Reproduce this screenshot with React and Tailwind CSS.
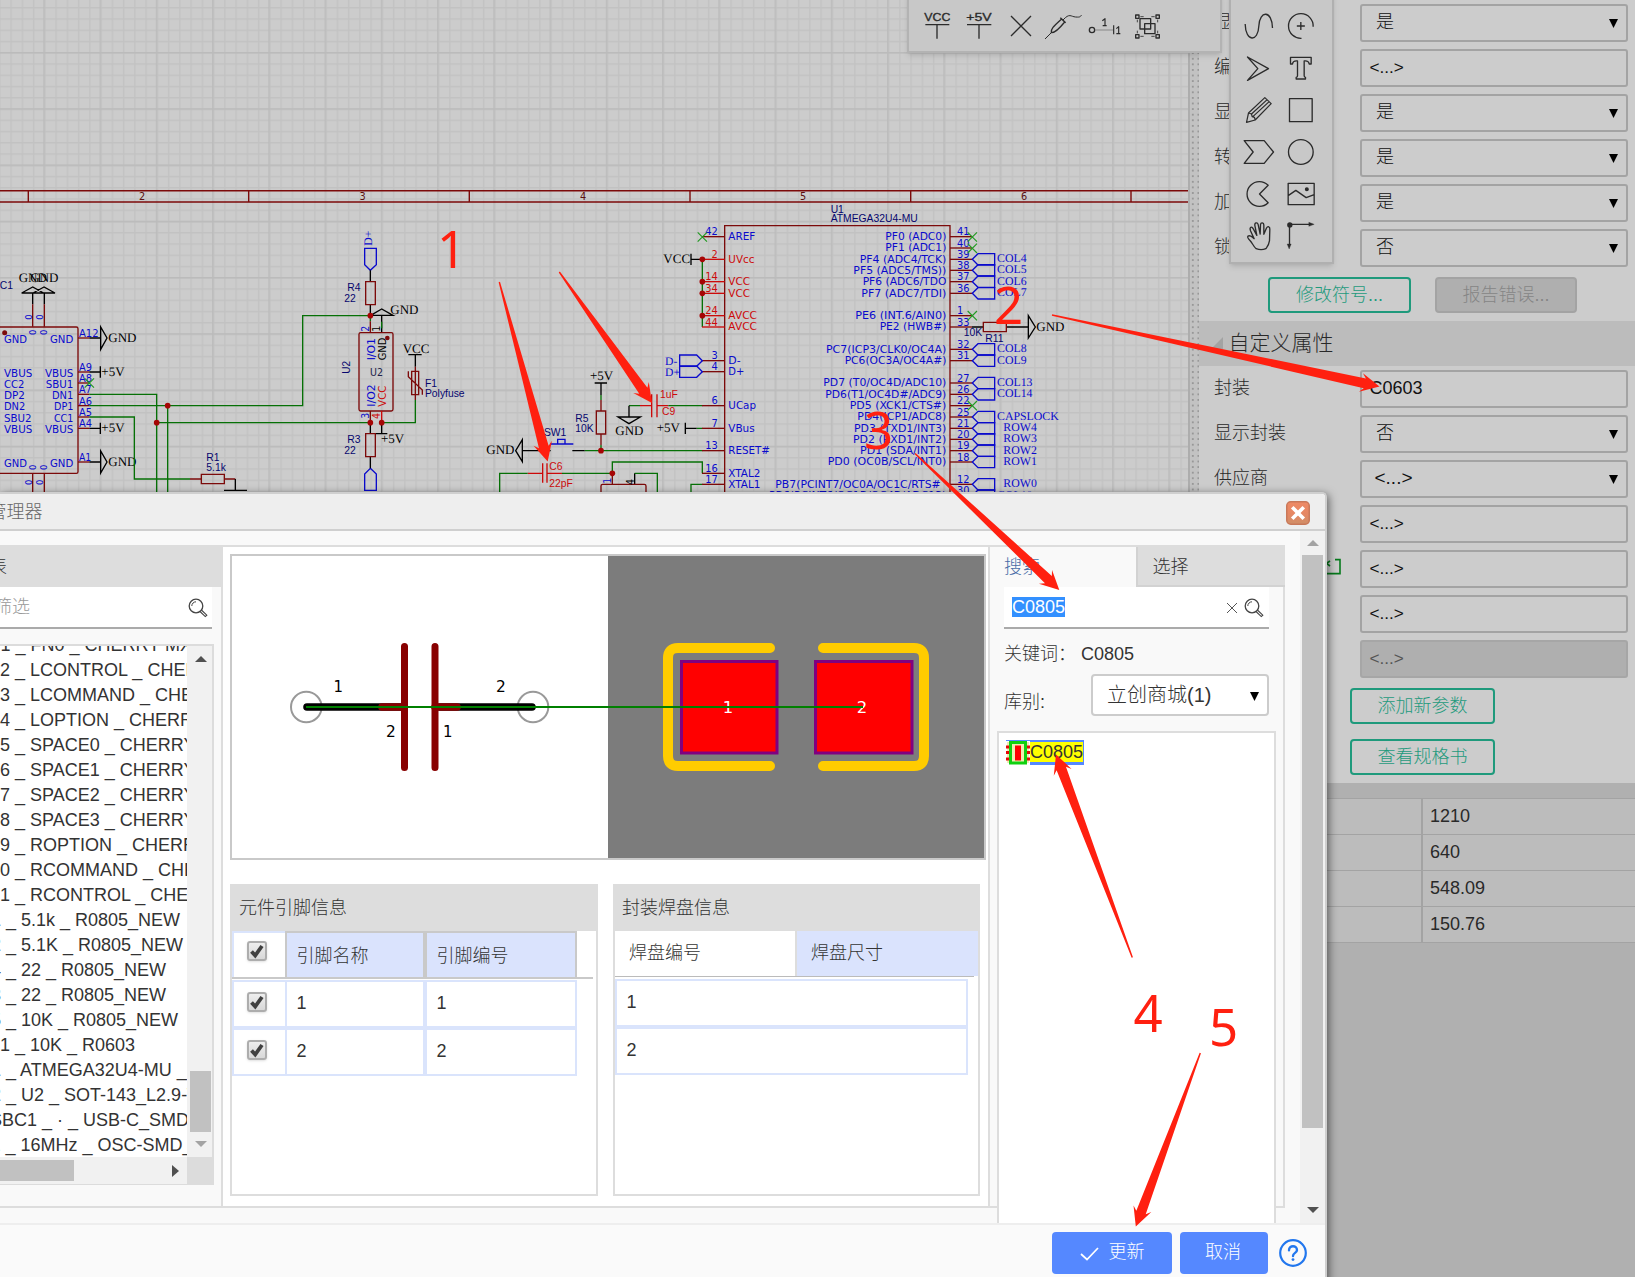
import React from "react";

const DR = "#7c0a0a";
const RED = "#cc0a0a";
const BLUE = "#0a0acc";
const GREEN = "#067006";
const NAVY = "#06066e";
const MARK = "#ff2010";

const FONTS = {
  pin: '"DejaVu Sans", sans-serif',
  label: '"Liberation Sans", sans-serif',
  net: '"Liberation Serif", serif',
};

function T({ x, y, t, c = BLUE, f = "pin", s = 31, w, end, r }) {
  return (
    <text
      x={x}
      y={y}
      fill={c}
      fontFamily={FONTS[f]}
      fontSize={s}
      textAnchor={end ? "end" : "start"}
      textLength={w}
      lengthAdjust={w ? "spacingAndGlyphs" : undefined}
      textRendering={f === "net" ? "geometricPrecision" : undefined}
      transform={r ? `rotate(-90 ${x} ${y})` : undefined}
    >
      {t}
    </text>
  );
}

const P = ({ d, c = DR, w = 4, fill = "none" }) => <path d={d} stroke={c} strokeWidth={w} fill={fill} />;
const Dot = ({ x, y, r = 8.5, c = "#a50505" }) => <circle cx={x} cy={y} r={r} fill={c} />;
const Cross = ({ x, y }) => (
  <P d={`M${x - 14},${y - 14} L${x + 14},${y + 14} M${x - 14},${y + 14} L${x + 14},${y - 14}`} c="#239a23" w={3.5} />
);
const Net = ({ x, y, t = "GND" }) => <T x={x} y={y} t={t} c="#000" f="net" s={39} />;
const Lab = ({ x, y, t, c = NAVY, r }) => <T x={x} y={y} t={t} c={c} f="label" s={31} r={r} />;

const usbLeft = [["GND", 489, 69], ["VBUS", 591, 85], ["CC2", 624, 61], ["DP2", 657, 63], ["DN2", 690, 64], ["SBU2", 726, 83], ["VBUS", 759, 85], ["GND", 861, 69]];
const usbRight = [["GND", 489, 70], ["VBUS", 591, 85], ["SBU1", 624, 83], ["DN1", 657, 64], ["DP1", 690, 58], ["CC1", 726, 58], ["VBUS", 759, 85], ["GND", 861, 70]];
const usbPins = [["A12", 471, 59], ["A9", 573, 39], ["A8", 606, 39], ["A7", 640, 38], ["A6", 674, 39], ["A5", 709, 39], ["A4", 741, 39], ["A1", 844, 37]];
const usbPinY = [474, 576, 609, 643, 677, 711, 745, 846];

const mcuLeft = [
  ["42", "AREF", 170, 81, 0], ["2", "UVcc", 238, 78, 1], ["14", "VCC", 305, 65, 1], ["34", "VCC", 340, 65, 1],
  ["24", "AVCC", 407, 86, 1], ["44", "AVCC", 441, 86, 1], ["3", "D-", 542, 37, 0], ["4", "D+", 575, 48, 0],
  ["6", "UCap", 677, 83, 0], ["7", "VBus", 745, 79, 0], ["13", "RESET#", 812, 125, 0], ["16", "XTAL2", 880, 96, 0], ["17", "XTAL1", 913, 96, 0],
];
const mcuRight = [
  ["41", "PF0 (ADC0)", 170, 676], ["40", "PF1 (ADC1)", 204, 676], ["39", "PF4 (ADC4/TCK)", 238, 599, "COL4"],
  ["38", "PF5 (ADC5/TMS))", 271, 580, "COL5"], ["37", "PF6 (ADC6/TDO", 305, 608, "COL6"], ["36", "PF7 (ADC7/TDI)", 340, 604, "COL7"],
  ["1", "PE6 (INT.6/AIN0)", 407, 586], ["33", "PE2 (HWB#)", 441, 659], ["32", "PC7(ICP3/CLK0/OC4A)", 508, 498, "COL8"],
  ["31", "PC6(OC3A/OC4A#)", 542, 554, "COL9"], ["27", "PD7 (T0/OC4D/ADC10)", 609, 490, "COL13"], ["26", "PD6(T1/OC4D#/ADC9)", 643, 496, "COL14"],
  ["22", "PD5 (XCK1/CTS#)", 677, 569], ["25", "PD4(ICP1/ADC8)", 711, 592, "CAPSLOCK"], ["21", "PD3 (TXD1/INT3)", 745, 582, "ROW4"],
  ["20", "PD2 (RXD1/INT2)", 778, 579, "ROW3"], ["19", "PD1 (SDA/INT1)", 812, 600, "ROW2"], ["18", "PD0 (OC0B/SCL/INT0)", 846, 503, "ROW1"],
  ["12", "PB7(PCINT7/OC0A/OC1C/RTS#", 913, 346, "ROW0"], ["30", "PB6(PCINT6/OC1B/OC4B/ADC13)", 947, 327, "COL10"],
];

function Schematic() {
  return (
    <svg width="1188" height="492" viewBox="0 0 1188 492" className="block font-normal">
      <defs>
        <pattern id="grid" x="-0.85" y="7.05" width="11.25" height="11.25" patternUnits="userSpaceOnUse">
          <path d="M0.75,0 V11.25 M0,0.75 H11.25" stroke="#c2c2c2" strokeWidth="1.3" />
        </pattern>
        <pattern id="major" x="43.3" y="-4.2" width="56.25" height="56.25" patternUnits="userSpaceOnUse">
          <path d="M0.75,0 V56.25 M0,0.75 H56.25" stroke="#bbbbbb" strokeWidth="1.3" />
        </pattern>
      </defs>
      <rect width="1188" height="492" fill="#cccccc" />
      <rect width="1188" height="492" fill="url(#grid)" />
      <rect width="1188" height="492" fill="url(#major)" />
      <path d="M0,190.8 H1188 M0,202 H1188" stroke={DR} strokeWidth="1.5" />
      {[28.3, 248.7, 469.3, 690, 910.7, 1131].map((x) => (
        <path key={x} d={`M${x},191 V202`} stroke={DR} strokeWidth="1.4" />
      ))}
      {[["2", 139], ["3", 359.5], ["4", 580], ["5", 800], ["6", 1021]].map(([t, x]) => (
        <T key={t} x={x} y={200} t={t} c="#5a1010" s={10.6} w={6.2} />
      ))}

      <g transform="translate(0 180) scale(0.33333)">
        <Net x={56} y={306} />
        <Net x={91} y={306} />
        <Lab x={-1} y={326} t="C1" />
        <P d="M98,321 L65,339 H131 Z M132,321 L99,339 H165 Z M98,339 V373 M133,339 V373" c="#000" />
        <P d="M98,373 V440 M133,373 V440 M98,880 V936 M133,880 V936" />
        {[[95, 419], [128, 419], [107, 465], [140, 465], [95, 915], [128, 915], [107, 870], [140, 870]].map(([x, y]) => (
          <T key={x + "-" + y} x={x} y={y} t="0" r s={28} w={16} />
        ))}
        <P d="M0,441 H229 Q234,441 234,446 V875 Q234,880 229,880 H0" />
        <Dot x={14} y={458} r={7.5} c="#7c0a0a" />
        {usbLeft.map(([t, y, w]) => <T key={y} x={12} y={y} t={t} w={w} />)}
        {usbRight.map(([t, y, w]) => <T key={y} x={220} y={y} t={t} w={w} end />)}
        {usbPins.map(([t, y, w]) => <T key={t} x={237} y={y} t={t} w={w} />)}
        {usbPinY.map((y) => <P key={y} d={`M234,${y} H268`} />)}
        <P c="#000" d="M268,474 H301 M268,576 H301 M268,745 H301 M268,846 H301 M301,559 V593 M301,728 V762 M302,441 V508 L321,474 Z M302,813 V879 L321,846 Z" />
        <Net x={325} y={487} />
        <Net x={325} y={859} />
        <Net x={304} y={588} t="+5V" />
        <Net x={304} y={757} t="+5V" />
        <Cross x={268} y={609} />
        <P c={GREEN} d="M268,643 H470 V936 M268,677 H908 V407 H1111 V424 M503,677 V936 M470,728 H1111 M268,711 H403 V897 H570 M1145,728 H1246 V660" />
        <Lab x={619} y={843} t="R1" />
        <Lab x={619} y={872} t="5.1k" />
        <P d="M570,897 H604 M604,883 H673 V911 H604 Z M673,897 H706" />
        <P c="#000" d="M706,897 V931 M672,931 H741" />
        <T x={1117} y={197} t="D+" f="net" s={35} r />
        <P c={BLUE} d="M1094,205 H1129 V254 L1111,271 L1094,254 Z M1111,865 L1129,882 V931 H1094 V882 Z" />
        <P c="#000" d="M1111,271 V305 M1111,374 V407 M1145,387 L1112,406 H1179 Z M1145,407 V458 M1111,728 V761 M1145,728 V761 M1128,761 H1162 M1111,830 V865" />
        <P c={GREEN} d="M1145,425 V445" />
        <P d="M1097,305 H1126 V374 H1097 Z M1097,761 H1126 V830 H1097 Z M1111,424 V458 M1111,693 V728 M1082,458 H1174 Q1179,458 1179,463 V688 Q1179,693 1174,693 H1082 Q1077,693 1077,688 V463 Q1077,458 1082,458 Z" />
        <P c={RED} d="M1145,693 V728" />
        <Net x={1171} y={403} />
        <Net x={1143} y={790} t="+5V" />
        <Lab x={1042} y={333} t="R4" />
        <Lab x={1033} y={366} t="22" />
        <Lab x={1042} y={789} t="R3" />
        <Lab x={1033} y={822} t="22" />
        <T x={1107} y={455} t="2" r w={18} />
        <T x={1141} y={455} t="1" r w={18} c="#000" />
        <T x={1124} y={541} t="I/O1" r w={67} />
        <T x={1157} y={541} t="GND" r w={68} c="#000" />
        <T x={1051} y={581} t="U2" r w={38} c={NAVY} f="label" />
        <T x={1110} y={588} t="U2" w={39} c="#22224a" />
        <T x={1124} y={680} t="I/O2" r w={67} />
        <T x={1157} y={680} t="VCC" r w={63} c={RED} />
        <T x={1107} y={716} t="3" r w={18} />
        <T x={1140} y={717} t="4" r w={18} c={RED} />
        <Dot x={1162} y={474} r={7} c="#7c0a0a" />
        {[[503, 677], [470, 728], [1111, 407], [1111, 728], [1145, 728]].map(([x, y]) => <Dot key={x + "-" + y} x={x} y={y} />)}
      </g>

      <g transform="translate(400 180) scale(0.33333)">
        <Net x={8} y={520} t="VCC" />
        <P c="#000" d="M25,524 H65 M46,524 V560" />
        <P d="M46,560 V660 M35,574 H56 V644 H35 Z M25,574 V590 L67,630 V644" />
        <Lab x={75} y={620} t="F1" />
        <Lab x={75} y={650} t="Polyfuse" />
        <P c={RED} d="M755,643 V712 M771,643 V712 M720,677 H755 M771,677 H805" />
        <P c={GREEN} d="M687,677 H720 M805,677 H907 M890,745 H907 M603,645 V660 M603,795 V812 M554,812 H907" />
        <P c="#000" d="M687,677 V711 M654,711 H721 L687,731 Z M856,728 V762 M856,745 H890 M584,609 H621 M603,609 V645 M517,812 H554 M367,779 V845 L347,812 Z M367,812 H452 M704,880 V913" />
        <Net x={646} y={765} />
        <Net x={770} y={757} t="+5V" />
        <Net x={570} y={601} t="+5V" />
        <Net x={259} y={823} />
        <Lab x={780} y={654} t="1uF" c={RED} />
        <Lab x={786} y={705} t="C9" c={RED} />
        <P d="M603,660 V693 M589,693 H617 V762 H589 Z M603,762 V795 M637,880 V913 M603,936 V918 Q603,913 608,913 H733 Q738,913 738,918 V936" />
        <Lab x={526} y={726} t="R5" />
        <Lab x={526} y={755} t="10K" />
        <Lab x={432} y={768} t="SW1" />
        <P c={BLUE} d="M450,792 H520 M473,792 V778 H495 V792" />
        <P c={RED} d="M428,850 V908 M441,850 V908 M383,880 H428 M441,880 H486" />
        <P c={GREEN} d="M486,880 H637 V846 H907 V880 M299,936 V880 H383 M704,880 H772 V936 M873,936 V913 H907" />
        <Lab x={448} y={869} t="C6" c={RED} />
        <Lab x={448} y={920} t="22pF" c={RED} />
        <T x={633} y={911} t="1" r w={18} />
        <T x={702} y={915} t="4" r w={18} c="#000" />
        <Dot x={603} y={812} />
        <Dot x={637} y={880} />
      </g>

      <g transform="translate(660 180) scale(0.33333)">
        <P d="M194,936 V137 H870 V936" />
        <Lab x={512} y={99} t="U1" />
        <Lab x={512} y={126} t="ATMEGA32U4-MU" />
        <Net x={10} y={250} t="VCC" />
        <P c="#000" d="M93,221 V255 M93,238 H126" />
        <P c={GREEN} d="M127,238 V441" />
        {mcuLeft.map(([n, t, y, w, power]) => (
          <g key={n}>
            <P d={`M126,${y} H194`} c={power ? RED : DR} />
            <T x={173} y={y - 4} t={n} c={power ? RED : BLUE} w={n.length * 18.8} end />
            <T x={205} y={y + 10} t={t} c={power ? RED : BLUE} w={w} />
          </g>
        ))}
        {[238, 305, 340, 407].map((y) => <Dot key={y} x={127} y={y} />)}
        <Cross x={127} y={171} />
        {mcuRight.map(([n, t, y, x, net]) => (
          <g key={n}>
            <P d={`M870,${y} H936`} />
            <T x={891} y={y - 4} t={n} w={n.length * 18.8} />
            <T x={x} y={y + 10} t={t} w={(n === "12" ? 842 : 859) - x} />
            {net && <P c={BLUE} d={`M937,${y} L954,${y - 17} H1004 V${y + 17} H954 Z`} />}
            {net && <T x={net[0] === "R" ? 1030 : 1011} y={y + 9} t={net} f="net" s={35.5} />}
          </g>
        ))}
        {[171, 205, 407, 677].map((y) => <Cross key={y} x={937} y={y} />)}
        {[[542, "D-"], [575, "D+"]].map(([y, t]) => (
          <g key={t}>
            <P c={BLUE} d={`M127,${y} L110,${y - 17} H59 V${y + 17} H110 Z`} />
            <T x={15} y={y + 14} t={t} f="net" s={35} />
          </g>
        ))}
        <P c="#000" d="M936,441 H970 M1039,441 H1105 M1105,407 V474 L1126,441 Z" />
        <P d="M970,427 H1039 V455 H970 Z" />
        <Net x={1129} y={454} />
        <Lab x={911} y={468} t="10K" />
        <Lab x={976} y={486} t="R11" />
      </g>
    </svg>
  );
}

const Cell = ({ vb, children }) => (
  <svg width="42" height="42" viewBox={vb} fill="none" stroke="#2b2b2b" strokeWidth="4" strokeLinejoin="round">
    {children}
  </svg>
);

function TopToolbar() {
  const txt = { fontFamily: FONTS.label, fontSize: 31, fill: "#2b2b2b", stroke: "#2b2b2b", strokeWidth: 1 };
  return (
    <div className="absolute left-[907px] -top-2 w-[315px] h-[61px] flex pt-[11px] pl-[7px] bg-[#c8c8c8] border-2 border-[#b3b3b3] shadow-md font-normal">
      <Cell vb="77 15 126 126">
        <text x="102" y="62" style={txt} textLength="78" lengthAdjust="spacingAndGlyphs">VCC</text>
        <path d="M105,74 H177 M140,74 V116" />
      </Cell>
      <Cell vb="203 15 126 126">
        <text x="228" y="62" style={txt} textLength="76" lengthAdjust="spacingAndGlyphs">+5V</text>
        <path d="M230,74 H303 M266,74 V116" />
      </Cell>
      <Cell vb="329 15 126 126">
        <path d="M362,48 L422,108 M422,48 L362,108" />
      </Cell>
      <Cell vb="457 15 126 126">
        <path d="M485,98 C483,88 490,80 516,57 L525,66 C504,92 494,99 485,98 Z M512,53 L528,68" />
        <path d="M466,117 L486,97 M520,60 C540,38 543,50 558,51 S571,50 576,45" strokeWidth="3" />
      </Cell>
      <Cell vb="583 15 126 126">
        <circle cx="607" cy="90" r="8" />
        <path d="M616,90 H670" stroke="#888" strokeWidth="3" />
        <path d="M672,76 V103 M638,62 L646,56 V77 M639,77 H651 M680,86 L687,80 V101 M680,101 H692" strokeWidth="3.5" />
      </Cell>
      <Cell vb="709 15 126 126">
        <path d="M738,45 h10 v10 h-10 Z M799,45 h10 v10 h-10 Z M738,104 h10 v10 h-10 Z M799,104 h10 v10 h-10 Z" />
        <path d="M751,56 H783 V87 H751 Z M765,71 H796 V101 H765 Z" />
        <path d="M752,50 H762 M785,50 H795 M752,109 H762 M785,109 H795 M743,59 V67 M743,92 V100 M804,59 V67 M804,92 V100" strokeWidth="2.5" />
      </Cell>
    </div>
  );
}

function Palette() {
  return (
    <div className="absolute left-[1229px] -top-2 w-[105px] h-[272px] pt-[11px] pl-[6.5px] bg-[#c8c8c8] border-2 border-[#b0b0b0] shadow-md">
      <div className="grid grid-cols-[42px_42px] auto-rows-[42px]">
        <Cell vb="145.5 15 126 126"><path d="M167,72 C168,126 206,128 208,78 C210,30 248,30 249,84" /></Cell>
        <Cell vb="271.5 15 126 126"><path d="M371,80 A37,37 0 1 0 336,115 M334,66 V90 M322,78 H346" /></Cell>
        <Cell vb="145.5 141 126 126"><path d="M174,171 L237,206 L174,241 L205,206 Z" /></Cell>
        <Cell vb="271.5 141 126 126">
          <path d="M303,172 H365 V192 H359 C358,184 354,182 344,183 V227 Q344,231 348,232 V237 H320 V232 Q324,231 324,227 V183 C314,182 310,184 309,192 H303 Z" />
        </Cell>
        <Cell vb="145.5 267 126 126">
          <path d="M171,367 L177,339 L226,293 L245,311 L197,360 Z M177,339 L186,342 L188,350 L195,352 L197,360 M186,342 L233,299 M190,350 L239,305" strokeWidth="3.6" />
        </Cell>
        <Cell vb="271.5 267 126 126"><path d="M300,296 H368 V365 H300 Z" /></Cell>
        <Cell vb="145.5 393 126 126"><path d="M164,422 H224 L252,456 L224,490 H164 L191,456 Z" /></Cell>
        <Cell vb="271.5 393 126 126"><circle cx="334" cy="456" r="37" /></Cell>
        <Cell vb="145.5 519 126 126"><path d="M236,556 A37,37 0 1 0 236,608 L210,582 Z" /></Cell>
        <Cell vb="271.5 519 126 126">
          <path d="M296,550 H374 V614 H296 Z M296,587 L319,571 L350,593 L374,584" />
          <circle cx="352" cy="568" r="4" fill="#2b2b2b" />
        </Cell>
        <Cell vb="145.5 645 126 126">
          <path d="M200,746 C192,740 188,728 182,722 C176,716 173,712 175,709 C180,704 188,710 194,716 L183,692 C179,681 187,678 191,686 L202,706 L196,676 C195,667 204,666 206,674 L212,702 L213,674 C214,666 223,667 223,675 L223,703 L231,684 C235,677 242,680 241,688 L240,722 C238,736 233,740 229,746 Q215,752 200,746 Z" />
        </Cell>
        <Cell vb="271.5 645 126 126">
          <path d="M300,675 V735 M301,673 H360" />
          <circle cx="301" cy="675" r="6" fill="#2b2b2b" />
          <path d="M358,667 L374,673 L358,679 Z M293,732 L299,747 L305,732 Z" fill="#2b2b2b" strokeWidth="1" />
        </Cell>
      </div>
    </div>
  );
}

const Caret = () => (
  <svg width="9" height="9" viewBox="0 0 9 9" className="mt-[2px]"><path d="M0,0 H9 L4.5,9 Z" fill="#000" /></svg>
);

function Field({ label, value, select, disabled }) {
  const latin = value.startsWith("<");
  return (
    <div className="flex items-center h-[38px] mb-[7px] pl-[15px]">
      <div className="w-[146px] pb-[2px] text-[18px] leading-6 text-[#292929] whitespace-nowrap">{label}</div>
      <div
        className={
          "w-[268px] h-[38px] rounded-[3px] border-2 flex items-center justify-between pb-[1px] " +
          (select ? "pr-[8px] " : "pl-[7.5px] ") +
          (select ? (latin ? "pl-[12.5px] text-[19px] " : "pl-[14px] text-[18px] ") : latin ? "text-[17.2px] " : "text-[18px] ") +
          (disabled ? "bg-[#afafaf] border-[#a6a6a6] text-[#555]" : "bg-[#cccccc] border-[#a3a3a3] text-[#111]")
        }
      >
        <span>{value}</span>
        {select && <Caret />}
      </div>
    </div>
  );
}

function Properties() {
  return (
    <div className="w-[436px] h-full bg-[#b0b0b0]">
      <div className="h-[783px] bg-[#cccccc] pt-1">
        <Field label="显" value="是" select />
        <Field label="编" value="<...>" />
        <Field label="显" value="是" select />
        <Field label="转" value="是" select />
        <Field label="加" value="是" select />
        <Field label="锁" value="否" select />
        <div className="flex gap-6 pl-[69px] pt-[3px] h-[47px] text-[18px]">
          <button className="w-[143px] h-9 rounded border-2 border-[#1f9a7c] text-[#1f9a7c]">修改符号...</button>
          <button className="w-[142px] h-9 rounded border-2 border-[#a3a3a3] bg-[#afafaf] text-[#858585]">报告错误...</button>
        </div>
        <div className="h-[45px] bg-[#bcbcbc] flex items-center pl-[12px] mb-1 text-[21px] text-[#292929]">
          <svg width="12" height="12" className="mr-[5.5px] -mt-[2px]"><path d="M12,0 V12 H0 Z" fill="#a3a3a3" /></svg>
          <span className="pb-[2px]">自定义属性</span>
        </div>
        <Field label="封装" value="C0603" />
        <Field label="显示封装" value="否" select />
        <Field label="供应商" value="<...>" select />
        <Field label="" value="<...>" />
        <Field label="" value="<...>" />
        <Field label="" value="<...>" />
        <Field label="" value="<...>" disabled />
        <div className="flex flex-col gap-[15px] pl-[151px] pt-[3px] text-[18px]">
          <button className="w-[145px] h-9 rounded border-2 border-[#1f9a7c] text-[#1f9a7c] pt-[1px]">添加新参数</button>
          <button className="w-[145px] h-9 rounded border-2 border-[#1f9a7c] text-[#1f9a7c] pt-[1px]">查看规格书</button>
        </div>
      </div>
      <div className="mt-[15px] border-t border-[#a3a3a3] text-[18px] text-[#292929]">
        {["1210", "640", "548.09", "150.76"].map((v) => (
          <div key={v} className="h-9 flex border-b border-[#a3a3a3] bg-[#bcbcbc]">
            <div className="w-[224px] border-r-2 border-[#a3a3a3]" />
            <div className="pl-[7px] leading-[34px]">{v}</div>
          </div>
        ))}
      </div>
    </div>
  );
}

const SearchIcon = () => (
  <svg width="20" height="20" viewBox="0 0 20 20" fill="none" stroke="#444" className="mt-[2px]">
    <circle cx="8" cy="8" r="6.8" strokeWidth="1.3" />
    <path d="M3.8,8 A4.2,4.2 0 0 1 8,3.8" strokeWidth="1" />
    <path d="M12,13.5 L17.3,18.6 L18.8,17.2 L13.4,12" strokeWidth="1.1" />
  </svg>
);

const items = [
  ["1 _ FN0 _ CHERRY MX", 0.5], ["2 _ LCONTROL _ CHERRY", 0], ["3 _ LCOMMAND _ CHERRY", 0], ["4 _ LOPTION _ CHERRY", 0],
  ["5 _ SPACE0 _ CHERRY", 0], ["6 _ SPACE1 _ CHERRY", 0], ["7 _ SPACE2 _ CHERRY", 0], ["8 _ SPACE3 _ CHERRY", 0],
  ["9 _ ROPTION _ CHERRY", 0], ["0 _ RCOMMAND _ CHERRY", 0], ["1 _ RCONTROL _ CHERRY", 0], ["1 _ 5.1k _ R0805_NEW", -9],
  ["2 _ 5.1K _ R0805_NEW", -9], ["4 _ 22 _ R0805_NEW", -9], ["3 _ 22 _ R0805_NEW", -9], ["5 _ 10K _ R0805_NEW", -9],
  ["1 _ 10K _ R0603", 0], ["1 _ ATMEGA32U4-MU _ QFN", -9], ["2 _ U2 _ SOT-143_L2.9-W", -9], ["SBC1 _ · _ USB-C_SMD-T", -10], ["1 _ 16MHz _ OSC-SMD_L", -9.5],
];

function ComponentList() {
  return (
    <div className="w-[223px] shrink-0 h-full bg-[#f9f9f9] border-r-2 border-[#dddddd] overflow-hidden">
      <div className="h-10 w-[223px] bg-[#dddddd] text-[18px] leading-10 text-[#333]">
        <span className="-ml-[11px]">表</span>
      </div>
      <div className="w-[212px] h-[42px] bg-white border-b-2 border-[#aaaaaa] flex items-center justify-between pr-[4px]">
        <span className="-ml-[6px] text-[18px] text-[#999]">筛选</span>
        <SearchIcon />
      </div>
      <div className="mt-[15px] w-[214px] h-[541px] bg-white border-t-2 border-r-2 border-b border-[#dcdcdc]">
        <div className="flex h-[511px]">
          <div className="w-[187px] h-full overflow-hidden text-[18px] text-[#333] whitespace-nowrap">
            <div className="-mt-[13px]">
              {items.map(([t, x], i) => (
                <div key={i} className="h-[25px] leading-[25px]" style={{ marginLeft: x }}>{t}</div>
              ))}
            </div>
          </div>
          <div className="w-[25px] bg-[#f1f1f1] flex flex-col items-center pl-[2px]">
            <svg width="12" height="6" className="mt-[10px]"><path d="M0,6 H12 L6,0 Z" fill="#505050" /></svg>
            <div className="mt-[409px] w-[21px] h-[61px] bg-[#c1c1c1]" />
            <svg width="12" height="6" className="mt-[9px]"><path d="M0,0 H12 L6,6 Z" fill="#a3a3a3" /></svg>
          </div>
        </div>
        <div className="flex h-[27px]">
          <div className="w-[187px] bg-[#f1f1f1] flex items-center justify-between pr-[8px]">
            <div className="w-[74px] h-[21px] bg-[#c1c1c1]" />
            <svg width="7" height="12"><path d="M0,0 V12 L7,6 Z" fill="#505050" /></svg>
          </div>
          <div className="w-[25px] bg-[#dcdcdc]" />
        </div>
      </div>
    </div>
  );
}

function Preview() {
  const txt = { fontFamily: FONTS.pin, fontSize: 16.5 };
  return (
    <div className="w-[756px] h-[306px] border-2 border-[#c9c9c9] font-normal">
      <svg width="752" height="302" viewBox="232 556 752 302" className="block">
        <rect x="232" y="556" width="752" height="302" fill="#fff" />
        <rect x="608" y="556" width="376" height="302" fill="#7c7c7c" />
        <circle cx="306.3" cy="707" r="15.3" fill="none" stroke="#999" strokeWidth="2" />
        <circle cx="533" cy="707" r="15.3" fill="none" stroke="#999" strokeWidth="2" />
        <g strokeLinecap="round" strokeWidth="7.6">
          <path d="M307,707 H400 M440,707 H532" stroke="#000" />
          <path d="M382,707 H404 M435,707 H457" stroke="#880000" />
          <path d="M404.5,646.5 V767.5 M435,646.5 V767.5" stroke="#880000" strokeWidth="7" />
        </g>
        <g fill="none" stroke="#ffcc00" strokeWidth="10" strokeLinecap="round">
          <path d="M770,648 H678 Q668,648 668,658 V756 Q668,766 678,766 H770" />
          <path d="M823,648 H914 Q924,648 924,658 V756 Q924,766 914,766 H823" />
        </g>
        <g fill="#ff0000" stroke="#800080" strokeWidth="3">
          <rect x="681.5" y="661.5" width="95.5" height="91.5" />
          <rect x="815.5" y="661.5" width="96.5" height="91.5" />
        </g>
        <g fill="#fff" style={txt} textAnchor="middle">
          <text x="728" y="713">1</text>
          <text x="862" y="713">2</text>
        </g>
        <path d="M306,707 H863" stroke="#008000" strokeWidth="2" />
        <g fill="#000" style={txt}>
          <text x="333.5" y="692" textLength="9.5" lengthAdjust="spacingAndGlyphs">1</text>
          <text x="496" y="692" textLength="9.8" lengthAdjust="spacingAndGlyphs">2</text>
          <text x="386" y="737" textLength="9.8" lengthAdjust="spacingAndGlyphs">2</text>
          <text x="443" y="737" textLength="9.5" lengthAdjust="spacingAndGlyphs">1</text>
        </g>
      </svg>
    </div>
  );
}

const Check = () => (
  <div className="w-[20px] h-[20px] rounded-[3px] border-2 border-[#adadad] bg-gradient-to-b from-[#eeeeee] to-[#d8d8d8] shadow-sm">
    <svg width="16" height="16" viewBox="0 0 16 16"><path d="M2.5,8.5 L6.2,12.5 L13,3" fill="none" stroke="#404040" strokeWidth="3.8" /></svg>
  </div>
);

function PinTable() {
  return (
    <div className="w-[368px] h-[312px] border-2 border-t-0 border-[#dddddd] bg-white">
      <div className="-mx-[2px] h-[47px] bg-[#dddddd] pl-[9px] text-[18px] leading-[49px] text-[#333]">元件引脚信息</div>
      <div className="w-[361px] h-[48px] border-b-2 border-[#c9c9c9] flex text-[18px] text-[#333]">
        <div className="w-[53px] border-2 border-b-0 border-r-0 border-[#dae4fc] pl-[13px] pt-[8px]"><Check /></div>
        <div className="w-[140px] border-2 border-b-0 border-[#c9c9c9] bg-[#dae3fd] pl-[9.5px] leading-[46px]">引脚名称</div>
        <div className="w-[152px] border-2 border-b-0 border-[#c9c9c9] bg-[#dae3fd] pl-[9.5px] leading-[46px]">引脚编号</div>
      </div>
      <div className="mt-[1px] text-[18px] text-[#333]">
        {["1", "2"].map((n) => (
          <div key={n} className="flex h-12">
            <div className="w-[53px] border-2 border-r-0 border-[#dae4fc] pl-[13px] pt-[10px]"><Check /></div>
            <div className="w-[140px] border-2 border-[#dae4fc] pl-[9.5px] leading-[43px]">{n}</div>
            <div className="w-[152px] border-2 border-[#dae4fc] pl-[9.5px] leading-[43px]">{n}</div>
          </div>
        ))}
      </div>
    </div>
  );
}

function PadTable() {
  return (
    <div className="w-[367px] h-[312px] border-2 border-t-0 border-[#dddddd] bg-white">
      <div className="-mx-[2px] h-[47px] bg-[#dddddd] pl-[9px] text-[18px] leading-[49px] text-[#333]">封装焊盘信息</div>
      <div className="flex h-[45px] text-[18px] leading-[45px] text-[#333]">
        <div className="w-[182px] border-r-2 border-[#dddddd] pl-[14px]">焊盘编号</div>
        <div className="flex-1 bg-[#dae3fd] pl-[14px]">焊盘尺寸</div>
      </div>
      <div className="w-[359px] h-px bg-[#bbbbbb]" />
      <div className="mt-[2px] text-[18px] text-[#333]">
        {["1", "2"].map((n) => (
          <div key={n} className="h-12 w-[353px] border-2 border-[#dae4fc] pl-[9.5px] leading-[43px]">{n}</div>
        ))}
      </div>
    </div>
  );
}

function SearchColumn() {
  return (
    <div className="w-[293px] shrink-0 h-full bg-[#f9f9f9] text-[18px] text-[#333]">
      <div className="flex h-10 leading-10">
        <div className="w-[146px] pl-[14px] text-[#4a6da7]">搜索</div>
        <div className="flex-1 -mr-[2px] bg-[#dddddd] border-l-2 border-b-2 border-[#d2d2d2] pl-[14.5px]">选择</div>
      </div>
      <div className="ml-[14px] w-[265px] h-[42px] bg-white border-b-2 border-[#aaaaaa] flex items-center pl-2 pr-[5px]">
        <span className="h-5 leading-5 bg-[#3390ff] text-white text-[18px]">C0805</span>
        <svg width="12" height="12" className="ml-auto mr-[6px] mt-[1px]" stroke="#555"><path d="M1,1 L11,11 M11,1 L1,11" /></svg>
        <SearchIcon />
      </div>
      <div className="ml-[14px] h-[45px] flex items-center pt-[5px]">
        <span className="w-[77px]">关键词：</span>
        <span>C0805</span>
      </div>
      <div className="ml-[14px] flex h-[42px]">
        <span className="w-[87px] pt-[16px] leading-6">库别:</span>
        <div className="w-[178px] h-[42px] bg-white border-2 border-[#cccccc] rounded flex items-center justify-between pl-[14px] pr-[8px] text-[20px]">
          <span>立创商城(1)</span>
          <Caret />
        </div>
      </div>
      <div className="relative mt-[15px] ml-[7px] w-[279px] h-[500px] bg-white border-2 border-[#dddddd] pl-[7px] pt-[7px]">
        <div className="flex">
          <svg width="24" height="25" viewBox="0 0 24 25">
            <path d="M0,0.5 H24" stroke="#5588ff" />
            <rect x="1" y="2" width="22" height="21" fill="#f0ecb0" />
            <path d="M0,7 H6 M0,12.5 H6 M0,19 H6 M18,7 H24 M18,12.5 H24 M18,19 H24" stroke="#e80808" strokeWidth="3" />
            <rect x="4.5" y="2.5" width="15" height="20.5" fill="#f0ecb0" stroke="#10d010" strokeWidth="3" />
            <rect x="9" y="5.5" width="6" height="15" fill="#ff0000" />
          </svg>
          <div className="h-[25px] bg-[#5588ff] pt-[2px] pr-[1px]">
            <div className="h-5 leading-5 bg-[#ffff00] text-[18px]">C0805</div>
          </div>
        </div>
      </div>
    </div>
  );
}

function Dialog() {
  return (
    <div className="absolute left-0 top-[492px] w-[1327px] h-[800px] flex flex-col bg-[#fafafa] border-t-2 border-r-2 border-[#cfcfcf] rounded-tr-[5px] shadow-[2px_2px_8px_rgba(0,0,0,0.5)]">
      <div className="h-[37px] shrink-0 bg-[#eeeeee] border-b-2 border-[#cfcfcf] flex items-center justify-between pt-[2px] pr-[15px] text-[18px] text-[#666] overflow-hidden rounded-tr-[4px]">
        <span className="-ml-[11.5px]">管理器</span>
        <svg width="24" height="24" viewBox="0 0 24 24">
          <defs>
            <linearGradient id="close" x1="0" y1="0" x2="0" y2="1">
              <stop offset="0" stopColor="#ee8a66" />
              <stop offset="0.55" stopColor="#e58763" />
              <stop offset="1" stopColor="#cf8f68" />
            </linearGradient>
          </defs>
          <rect x="0.75" y="0.75" width="22.5" height="22.5" rx="4" fill="url(#close)" stroke="#c9795a" strokeWidth="1.5" />
          <path d="M7.5,7.5 L16.5,16.5 M16.5,7.5 L7.5,16.5" stroke="#fff" strokeWidth="3.6" strokeLinecap="square" />
        </svg>
      </div>
      <div className="flex h-[692px] shrink-0 overflow-hidden bg-[#f9f9f9]">
        <div className="w-[1300px] pt-[14px]">
          <div className="w-[1285px] h-[663px] border-t-2 border-r-2 border-b-2 border-[#dddddd] flex">
            <ComponentList />
            <div className="w-[767px] shrink-0 h-full bg-white border-r-2 border-[#dddddd] pl-[7px] pt-[7px]">
              <Preview />
              <div className="mt-6 flex gap-[15px]">
                <PinTable />
                <PadTable />
              </div>
            </div>
            <SearchColumn />
          </div>
        </div>
        <div className="w-[25px] bg-[#f1f1f1] flex flex-col items-center">
          <svg width="12" height="6" className="mt-[9px]"><path d="M0,6 H12 L6,0 Z" fill="#a3a3a3" /></svg>
          <div className="mt-[9px] w-[21px] h-[573px] bg-[#c1c1c1]" />
          <svg width="12" height="6" className="mt-[79px]"><path d="M0,0 H12 L6,6 Z" fill="#505050" /></svg>
        </div>
      </div>
      <div className="h-[60px] border-t-2 border-[#eeeeee] flex pt-[7px] pl-[1052px] text-[18px] text-white">
        <button className="w-[120px] h-[42px] rounded bg-[#5588ff] flex items-center justify-center gap-[10px] pb-[1px]">
          <svg width="19" height="14" viewBox="0 0 19 14" className="mt-[3px]"><path d="M1,7 L7,12.5 L18,1" fill="none" stroke="#fff" strokeWidth="1.7" /></svg>
          更新
        </button>
        <button className="ml-2 w-[88px] h-[42px] rounded bg-[#5588ff] pr-[2px] pb-[2px]">取消</button>
        <svg width="28" height="28" viewBox="0 0 28 28" className="ml-[11px] mt-[7px]" fill="none" stroke="#2277ee">
          <circle cx="14" cy="14" r="12.8" strokeWidth="2.2" />
          <path d="M10,11.2 C10,6 18,6 18,11 C18,14 14,13.8 14,17" strokeWidth="2.4" strokeLinecap="round" />
          <circle cx="14" cy="20.6" r="1.4" fill="#2277ee" stroke="none" />
        </svg>
      </div>
    </div>
  );
}

const arrows = [
  [499.3, 282, 547.7, 461.5], [559.3, 272, 652, 403], [1052, 315, 1379.5, 386.5],
  [915, 453.5, 1059.3, 590], [1132.3, 957.5, 1056, 754.5], [1200.3, 1053, 1135.8, 1226.5],
];

function Arrow({ p: [x1, y1, x2, y2] }) {
  const len = Math.hypot(x2 - x1, y2 - y1);
  const angle = (Math.atan2(y2 - y1, x2 - x1) * 180) / Math.PI;
  const s = len - 15;
  return (
    <path
      transform={`translate(${x1} ${y1}) rotate(${angle})`}
      d={`M0,-0.7 L${s},-5 L${s - 4},-9.5 L${len},0 L${s - 4},9.5 L${s},5 L0,0.7 Z`}
      fill={MARK}
    />
  );
}

function Annotations() {
  return (
    <svg width="1635" height="1277" className="absolute left-0 top-0 pointer-events-none font-normal">
      {arrows.map((p, i) => <Arrow key={i} p={p} />)}
      <g fill={MARK} fontFamily='"Noto Sans", sans-serif' fontSize="51">
        <text x="437" y="268">1</text>
        <text x="994" y="324">2</text>
        <text x="864" y="449">3</text>
        <text x="1133.5" y="1032">4</text>
        <text x="1209" y="1046">5</text>
      </g>
    </svg>
  );
}

export default function App() {
  return (
    <div className="relative w-[1635px] h-[1277px] overflow-hidden flex font-light font-['Liberation_Sans','Noto_Sans_CJK_SC',sans-serif] bg-[#cccccc]">
      <div className="w-[1188px] h-full shrink-0"><Schematic /></div>
      <div className="w-[11px] h-full shrink-0 border-l-2 border-[#adadad] bg-[#c2c2c2] bg-[radial-gradient(circle_at_50%_50%,#989898_1.1px,transparent_1.4px)] bg-[size:5.6px_5.6px]" />
      <Properties />
      <svg width="16" height="18" className="absolute left-[1326px] top-[558px]" fill="none" stroke="#067a1c" strokeWidth="1.6">
        <path d="M9,1.6 H14 V15.6 H0 M0,5 L4,8 M4,3 L1,5" />
      </svg>
      <TopToolbar />
      <Palette />
      <Dialog />
      <Annotations />
    </div>
  );
}
